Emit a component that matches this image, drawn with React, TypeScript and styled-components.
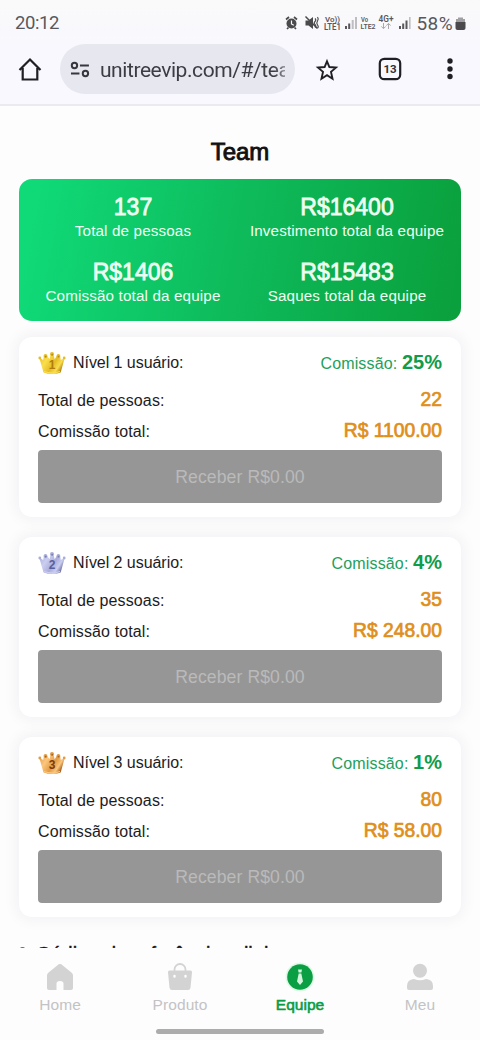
import React from 'react';
import styled, { createGlobalStyle } from 'styled-components';

const GlobalStyle = createGlobalStyle`
  * { box-sizing: border-box; }
  body { margin: 0; background: #fdfdfe; font-family: "Liberation Sans", Arial, sans-serif; color: #1c1c1e; }
`;

const Screen = styled.div`
  width: 480px;
  height: 1040px;
  display: flex;
  flex-direction: column;
  overflow: hidden;
  background: #fdfdfe;
`;

const Header = styled.header`
  flex: none;
  height: 106px;
  background: linear-gradient(#fafafa, #f8f8fe 45px);
  border-bottom: 2px solid #ebebef;
  font-family: Roboto, sans-serif;
`;

const StatusBar = styled.div`
  height: 44px;
  padding: 2px 14px 0 15px;
  display: flex;
  align-items: center;
  justify-content: space-between;
  color: #58585b;
  font-size: 18.5px;
`;

const Clock = styled.span`
  letter-spacing: -0.4px;
`;

const StatusIcons = styled.div`
  display: flex;
  align-items: center;
  height: 24px;
`;

const Battery = styled.span`
  font-size: 19px;
  margin: 0 2px 0 6px;
  letter-spacing: 0.4px;
`;

const Toolbar = styled.div`
  height: 50px;
  display: flex;
  align-items: center;
`;

const HomeSlot = styled.div`
  width: 60px;
  display: flex;
  justify-content: center;
`;

const AddressBar = styled.div`
  width: 235px;
  height: 50px;
  border-radius: 25px;
  background: #e7e7f0;
  display: flex;
  align-items: center;
  gap: 10px;
  padding: 1px 10px 0;
`;

const Url = styled.span`
  width: 186px;
  overflow: hidden;
  white-space: nowrap;
  font-size: 21px;
  line-height: 30px;
  color: #3c3c43;
  letter-spacing: -0.42px;
  mask-image: linear-gradient(90deg, #000 94%, rgba(0, 0, 0, 0.5));
`;

const Actions = styled.div`
  flex: 1;
  display: grid;
  grid-template-columns: 64px 62px 58px;
  justify-items: center;
  align-items: center;
`;

const Content = styled.main`
  flex: 1;
  min-height: 0;
  overflow: hidden;
  padding: 0 19px;
`;

const Title = styled.h1`
  margin: 0;
  padding-top: 29.5px;
  height: 72.5px;
  font-size: 24px;
  line-height: 32px;
  font-weight: 400;
  text-align: center;
  color: #111;
  -webkit-text-stroke: 0.9px currentColor;
`;

const Summary = styled.section`
  height: 142px;
  border-radius: 13px;
  padding: 14.5px 7px 0;
  display: grid;
  grid-template-columns: 214px 214px;
  grid-template-rows: 64.5px 64px;
  background: linear-gradient(100deg, #10da78 3%, #0ebb5b 49%, #0aa03d 98%);
  color: #eefff2;
`;

const Stat = styled.div`
  text-align: center;
  white-space: nowrap;
  display: flex;
  flex-direction: column;
  align-items: center;
`;

const StatValue = styled.div`
  font-size: 23px;
  line-height: 28px;
  -webkit-text-stroke: 0.8px currentColor;
`;

const StatLabel = styled.div`
  font-size: 15.2px;
  line-height: 19px;
  letter-spacing: 0.15px;
`;

const Card = styled.section`
  height: 180px;
  margin-top: 20px;
  padding: 8px 19px 0;
  border-radius: 13px;
  background: #fff;
  box-shadow: 0 0 14px 4px rgba(20, 20, 50, 0.045);
  &:first-of-type { margin-top: 16px; }
`;

const Cards = styled.div`
  display: flex;
  flex-direction: column;
`;

const Row = styled.div<{ $h: number }>`
  height: ${(p) => p.$h}px;
  display: flex;
  align-items: center;
  justify-content: space-between;
  font-size: 16px;
  white-space: nowrap;
`;

const Level = styled.div`
  display: flex;
  align-items: center;
  gap: 7px;
  letter-spacing: -0.05px;
`;

const Details = styled.div`
  padding-top: 3px;
  letter-spacing: 0.12px;
`;

const Commission = styled.div`
  margin-top: -2px;
  color: #23a05c;
  letter-spacing: 0.15px;
`;

const Percent = styled.b`
  font-size: 20px;
  letter-spacing: 0;
  color: #109c49;
`;

const Amount = styled.div`
  font-size: 19.3px;
  margin-top: -1px;
  letter-spacing: 0;
  color: #df8f1b;
  -webkit-text-stroke: 0.7px currentColor;
`;

const Receive = styled.button`
  display: block;
  width: 100%;
  height: 53.5px;
  margin: 3px 0 0;
  padding: 2px 0 0;
  border: 0;
  border-radius: 4px;
  background: #969696;
  color: #bababa;
  font-family: inherit;
  font-size: 17.6px;
  letter-spacing: 0.1px;
`;

const Referral = styled.div`
  margin-top: 21px;
  display: flex;
  align-items: center;
  gap: 8px;
  height: 34px;
  font-size: 20px;
  white-space: nowrap;
  color: #151515;
  -webkit-text-stroke: 0.4px currentColor;
`;

const Nav = styled.nav`
  flex: none;
  height: 92px;
  padding-top: 14px;
  background: #fdfdfe;
  display: flex;
  flex-direction: column;
  align-items: center;
  justify-content: space-between;
`;

const Tabs = styled.div`
  width: 100%;
  display: grid;
  grid-template-columns: repeat(4, 1fr);
`;

const Tab = styled.div<{ $active?: boolean }>`
  display: flex;
  flex-direction: column;
  align-items: center;
  gap: 3px;
  font-size: 15.5px;
  line-height: 20px;
  color: ${(p) => (p.$active ? '#0b9c43' : '#c3c3c5')};
  -webkit-text-stroke: ${(p) => (p.$active ? '0.6px' : '0')} currentColor;
  letter-spacing: ${(p) => (p.$active ? '0' : '0.1px')};
`;

const HomeIndicator = styled.div`
  width: 168px;
  height: 5px;
  margin-bottom: 6px;
  border-radius: 3px;
  background: #acacac;
`;

const StatusGlyphs = () => (
  <svg width="127" height="24" viewBox="282 11 127 24" fontFamily="Roboto, sans-serif" fill="#58585b">
    <circle cx="289.500" cy="23.500" r="5" fill="#4a4a4d" />
    <path d="M284 19.500l3-2.500M295 19.500l-3-2.500M286.500 27.500l-1.500 1.500M292.500 27.500l1.500 1.500" stroke="#4a4a4d" strokeWidth="1.700" />
    <path d="M289.500 20.500v3.500l2.300 1.200" fill="none" stroke="#fafafd" strokeWidth="1.200" />
    <path d="M303.500 20.500h3l4.500-3.500v12l-4.500-3.500h-3z" fill="#4a4a4d" />
    <path d="M303.500 16.500l12 12" stroke="#4a4a4d" strokeWidth="1.500" />
    <path d="M313 18.500q1.500 1.500 0 3t0 3 0 3M315.500 17q1.500 2 0 4t0 4 0 3" fill="none" stroke="#4a4a4d" strokeWidth="1.200" />
    <text x="323" y="22" fontSize="8" fontWeight="600" textLength="15" lengthAdjust="spacingAndGlyphs">Vo))</text>
    <text x="322" y="30" fontSize="8.500" fontWeight="600" textLength="17" lengthAdjust="spacingAndGlyphs">LTE1</text>
    <path d="M343 26h2v3h-2zM346.200 23.500h2v5.500h-2z" />
    <path d="M349.700 20h2v9h-2zM353 17h2v12h-2z" fill="#bdbdc2" />
    <text x="359" y="22" fontSize="7" fontWeight="600" textLength="7" lengthAdjust="spacingAndGlyphs">Vo</text>
    <text x="358.500" y="29" fontSize="7.500" fontWeight="600" textLength="15" lengthAdjust="spacingAndGlyphs">LTE2</text>
    <text x="376.500" y="22" fontSize="8.500" fontWeight="600" textLength="15" lengthAdjust="spacingAndGlyphs">4G+</text>
    <path d="M381.500 23v5.500M379.300 26.500l2.200 2 2.200-2M386.500 29v-5.500M384.300 25.500l2.200-2 2.200 2" fill="none" stroke="#a9a9ad" />
    <path d="M397 26h2v3h-2zM400.200 23.500h2v5.500h-2zM403.500 20.500h2v8.500h-2z" />
    <path d="M407 17h1.600v12H407z" fill="#bdbdc2" />
  </svg>
);

const BatteryGlyph = () => (
  <svg width="11" height="15" viewBox="0 0 11 15">
    <path d="M3 1.500h5v1.500h2v4H1V3h2z" fill="#a0a0a3" />
    <path d="M.5 6h10v6a2 2 0 0 1-2 2h-6a2 2 0 0 1-2-2z" fill="#4a4a4d" />
  </svg>
);

const crowns = [
  { light: '#f9de4e', mid: '#e6bc25', dark: '#b9890f', ink: '#b27c0c' },
  { light: '#cbcef0', mid: '#a9addb', dark: '#777cad', ink: '#5a609c' },
  { light: '#fbc67e', mid: '#e29b42', dark: '#ac621c', ink: '#7d3910' },
];

const Crown = ({ level }: { level: number }) => {
  const c = crowns[level - 1];
  const id = `crown${level}`;
  return (
    <svg width="28" height="24" viewBox="0 0 28 24">
      <defs>
        <linearGradient id={id} x1="0" y1="0" x2="1" y2="0.5">
          <stop offset="0" stopColor={c.mid} />
          <stop offset="0.35" stopColor={c.light} />
          <stop offset="0.65" stopColor={c.mid} />
          <stop offset="0.85" stopColor={c.light} />
          <stop offset="1" stopColor={c.dark} />
        </linearGradient>
      </defs>
      <path d="M1.200 6.500l4 2.500L6 4.500h3l2.500 3.700L12.700 3h2.600l1.400 5.200L19 4.500h3l.8 4.500 4-2.500L22.700 21.500Q14 24.500 5.500 21.500z" fill={`url(#${id})`} />
      <g fill={c.mid}>
        <circle cx="1.800" cy="7" r="1.400" />
        <circle cx="7.500" cy="5" r="1.900" />
        <circle cx="14" cy="3" r="2" />
        <circle cx="20.400" cy="5" r="1.900" />
        <circle cx="26.200" cy="7" r="1.400" />
      </g>
      <g fill={c.dark}>
        <circle cx="7.700" cy="5.600" r="0.900" />
        <circle cx="14.200" cy="3.700" r="0.900" />
        <circle cx="20.500" cy="5.600" r="0.900" />
      </g>
      <path d="M6 20.500q8 3 16 0" stroke={c.light} fill="none" strokeWidth="1.300" />
      <text x="14" y="18" fontSize="12" fontWeight="700" textAnchor="middle" fill={c.ink}>{level}</text>
    </svg>
  );
};

const stats = [
  ['137', 'Total de pessoas'],
  ['R$16400', 'Investimento total da equipe'],
  ['R$1406', 'Comissão total da equipe'],
  ['R$15483', 'Saques total da equipe'],
];

const levels = [
  { level: 1, percent: '25%', people: '22', total: 'R$ 1100.00' },
  { level: 2, percent: '4%', people: '35', total: 'R$ 248.00' },
  { level: 3, percent: '1%', people: '80', total: 'R$ 58.00' },
];

export default function App() {
  return (
    <Screen>
      <GlobalStyle />
      <Header>
        <StatusBar>
          <Clock>20:12</Clock>
          <StatusIcons>
            <StatusGlyphs />
            <Battery>58%</Battery>
            <BatteryGlyph />
          </StatusIcons>
        </StatusBar>
        <Toolbar>
          <HomeSlot>
            <svg width="26" height="26" viewBox="0 0 26 26" fill="none" stroke="#202024" strokeWidth="2.200">
              <path d="M2.500 14L13 3.500 23.500 14M5.700 12v11.500h14.600V12" />
            </svg>
          </HomeSlot>
          <AddressBar>
            <svg width="20" height="20" viewBox="0 0 20 20" fill="none" stroke="#36363c" strokeWidth="2">
              <circle cx="4.500" cy="5.500" r="2.700" />
              <path d="M10 5.500h9M1 13.500h8.500" />
              <circle cx="15.500" cy="13.500" r="2.700" />
            </svg>
            <Url>unitreevip.com/#/tea</Url>
          </AddressBar>
          <Actions>
            <svg width="24" height="24" viewBox="0 0 24 24" fill="none" stroke="#202024" strokeWidth="1.900">
              <path d="M12 4.300l2.400 5.700 6.600.6-5 4.300 1.500 6.800-5.500-3.600-5.500 3.600L8 14.900l-5-4.300 6.600-.6z" />
            </svg>
            <svg width="24" height="24" viewBox="0 0 24 24">
              <rect x="1.800" y="1.800" width="20.400" height="20.400" rx="4.500" fill="none" stroke="#202024" strokeWidth="2.200" />
              <text x="12" y="16" fontSize="11.500" fontWeight="700" textAnchor="middle" fill="#303035">13</text>
            </svg>
            <svg width="8" height="24" viewBox="0 0 8 24" fill="#202024">
              <circle cx="4" cy="4" r="2.700" />
              <circle cx="4" cy="12" r="2.700" />
              <circle cx="4" cy="19.500" r="2.700" />
            </svg>
          </Actions>
        </Toolbar>
      </Header>
      <Content>
        <Title>Team</Title>
        <Summary>
          {stats.map(([value, label]) => (
            <Stat key={label}>
              <StatValue>{value}</StatValue>
              <StatLabel>{label}</StatLabel>
            </Stat>
          ))}
        </Summary>
        <Cards>
          {levels.map((l) => (
            <Card key={l.level}>
              <Row $h={37}>
                <Level>
                  <Crown level={l.level} />
                  <span>Nível {l.level} usuário:</span>
                </Level>
                <Commission>Comissão: <Percent>{l.percent}</Percent></Commission>
              </Row>
              <Details>
                <Row $h={32}>
                  <span>Total de pessoas:</span>
                  <Amount>{l.people}</Amount>
                </Row>
                <Row $h={30}>
                  <span>Comissão total:</span>
                  <Amount>{l.total}</Amount>
                </Row>
              </Details>
              <Receive>Receber R$0.00</Receive>
            </Card>
          ))}
        </Cards>
        <Referral>
          <svg width="9" height="18" viewBox="0 0 9 18">
            <circle cx="3.500" cy="4" r="3" fill="#3973a5" />
            <path d="M.5 17V9q3-3 6 0v8z" fill="#3973a5" />
          </svg>
          <span>Código de referência e link:</span>
        </Referral>
      </Content>
      <Nav>
        <Tabs>
          <Tab>
            <svg width="30" height="30" viewBox="0 0 30 30" fill="#d3d3d4">
              <path d="M15 2q1.500 0 2.500 1.300L27 11q1 1 1 2.500V26q0 2-2 2h-7.500v-6.500q0-2.500-3.500-2.500t-3.500 2.500V28H4q-2 0-2-2V13.500Q2 12 3 11l9.500-7.700Q13.500 2 15 2z" />
            </svg>
            Home
          </Tab>
          <Tab>
            <svg width="30" height="30" viewBox="0 0 30 30">
              <path d="M9.500 10V7.500a5.500 5.500 0 0 1 11 0V10" fill="none" stroke="#d3d3d4" strokeWidth="1.800" />
              <path d="M4.500 8.500h21q1.700 0 1.500 1.700l-1.500 15.500q-.3 2.300-2.500 2.300H7q-2.200 0-2.500-2.300L3 10.200q-.2-1.700 1.500-1.700z" fill="#d3d3d4" />
              <path d="M9.500 14v.5M20.500 14v.5" stroke="#fff" strokeWidth="2.400" strokeLinecap="round" />
            </svg>
            Produto
          </Tab>
          <Tab $active>
            <svg width="30" height="30" viewBox="0 0 30 30">
              <circle cx="15" cy="15" r="14.500" fill="#e0f9e7" />
              <circle cx="15" cy="15" r="12.800" fill="#0b9f43" />
              <path d="M13 7.500h4l-.6 3h-2.800zM13.700 11.500h2.600l1.700 8-3 3.500-3-3.500z" fill="#d5f4dd" />
            </svg>
            Equipe
          </Tab>
          <Tab>
            <svg width="30" height="30" viewBox="0 0 30 30" fill="#d3d3d4">
              <circle cx="15" cy="8.800" r="7" />
              <path d="M2 26v-2q0-6.500 7-7 6 2.500 12 0 7 .5 7 7v2q0 2-2 2H4q-2 0-2-2z" />
            </svg>
            Meu
          </Tab>
        </Tabs>
        <HomeIndicator />
      </Nav>
    </Screen>
  );
}
